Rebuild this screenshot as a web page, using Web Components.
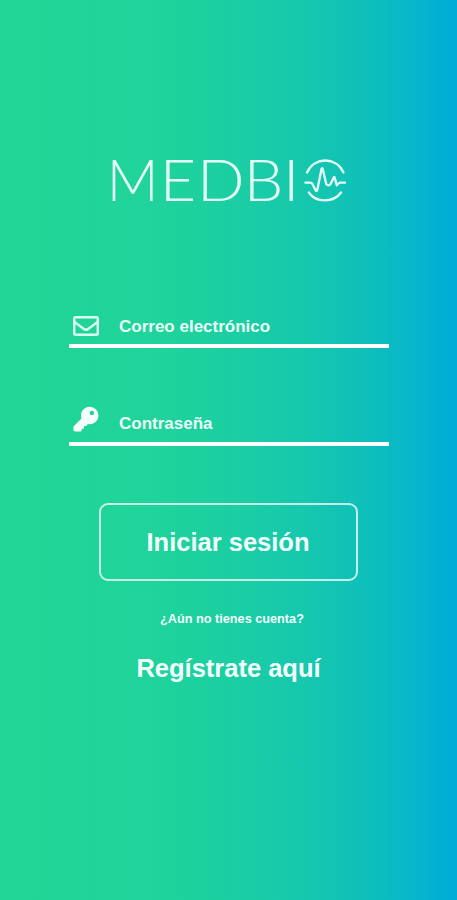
<!DOCTYPE html>
<html lang="es">
<head>
<meta charset="utf-8">
<title>MEDBIO</title>
<style>
  body {
    margin: 0;
    font-family: "Liberation Sans", Arial, sans-serif;
  }
</style>
</head>
<body>
<login-screen>
  <medbio-logo slot="logo"></medbio-logo>
  <login-field icon="mail">Correo electrónico</login-field>
  <login-field icon="key">Contraseña</login-field>
  <outline-button slot="actions">Iniciar sesión</outline-button>
  <sign-up-prompt slot="actions" question="¿Aún no tienes cuenta?">Regístrate aquí</sign-up-prompt>
</login-screen>

<script type="module">
class LoginScreen extends HTMLElement {
  constructor() {
    super();
    this.attachShadow({ mode: 'open' });

    this.shadowRoot.innerHTML = `
      <style>
        :host {
          display: flex;
          flex-direction: column;
          align-items: center;
          box-sizing: border-box;
          block-size: 900px;
          padding-block-start: 156px;
          color: #fff;
          background: linear-gradient(90deg,
            #22d696 0%, #20d499 20%, #1fd39b 35%, #1bcea3 52%,
            #16c8ad 66%, #0fc0b9 79%, #07b6cb 91%, #00add5 98%, #00add6 100%);
        }

        [part="fields"] {
          display: flex;
          flex-direction: column;
          gap: 57px;
          inline-size: 320px;
          margin-block: 104px 57px;
        }

        [part="actions"] {
          display: flex;
          flex-direction: column;
          align-items: center;
          gap: 30px;
        }
      </style>

      <slot name="logo"></slot>
      <div part="fields"><slot></slot></div>
      <div part="actions"><slot name="actions"></slot></div>
    `;
  }
}

class MedbioLogo extends HTMLElement {
  constructor() {
    super();
    this.attachShadow({ mode: 'open' });

    // the pulse emblem stands in for the final O
    this.shadowRoot.innerHTML = `
      <style>
        :host {
          display: block;
          inline-size: 237px;
          block-size: 50px;
        }

        svg {
          display: block;
          overflow: visible;
        }

        text {
          font: 300 57px Lato, sans-serif;
          fill: #e4fff6;
        }

        path {
          fill: none;
          stroke: #e4fff6;
          stroke-width: 2.3;
          stroke-linecap: round;
          stroke-linejoin: round;
        }
      </style>

      <svg width="237" height="50" viewBox="0 0 237 50">
        <text x="-3.300" y="45">M</text>
        <text x="45.300 79 121.700 157.300" y="45" transform="scale(1.1 1)">EDBI</text>
        <path d="M197 16.500C204.500 .5 226 .5 233.500 16.500"/>
        <path d="M198.800 36.500C206 47 223.500 47 231 36.500"/>
        <path d="M195.500 26.700H200.500Q202 26.700 202.700 28.500L205.700 34.500Q206.700 35.800 207.300 34L211.500 13Q212 11.500 212.700 13L216.300 28.300Q218.500 30.500 220.500 28.300L223.700 21.500Q224.400 20.500 224.800 22L226.700 29.300L228.500 27.500Q229.200 26.700 230.500 26.700H235"/>
      </svg>
    `;
  }
}

const icons = {
  mail: `
    <svg width="26" height="20" viewBox="0 0 26 20" fill="none" stroke="#d8fff1" stroke-width="2.5" stroke-linejoin="round">
      <rect x="1.2" y="1.2" width="23.600" height="17.600" rx="1.500"/>
      <path d="M1.500 6L10.500 12.800C12.200 14.100 13.800 14.100 15.500 12.800L24.500 6"/>
    </svg>`,
  key: `
    <svg width="27" height="27" viewBox="0 0 27 27" fill="#f6fffc">
      <path fill-rule="evenodd" d="M17.300.2A9.100 9.100 0 0 1 26.400 9.300A9 9 0 0 1 15.600 18.200L14.400 19.700Q14 20.200 13.400 20.200H11.500V22Q11.500 22.800 10.700 23H9V24.800Q8.900 25.800 8 26H2Q.4 26 .4 24.500V21.500Q.4 20.800 1 20.200L8.800 12.400A9.100 9.100 0 0 1 17.300.2ZM19.600 4.400A2.300 2.300 0 1 0 19.600 9A2.300 2.300 0 1 0 19.600 4.400Z"/>
    </svg>`
};

class LoginField extends HTMLElement {
  static observedAttributes = ['icon'];

  constructor() {
    super();
    this.attachShadow({ mode: 'open' });

    this.shadowRoot.innerHTML = `
      <style>
        :host {
          display: grid;
          grid-template-columns: 26px 1fr;
          column-gap: 20px;
          align-items: center;
          box-sizing: border-box;
          block-size: 40.500px;
          padding-inline-start: 4px;
          border-block-end: 4px solid #fff;
          color: #e9fff8;
          font-size: 17px;
          font-weight: 700;
          line-height: 20px;
        }

        :host([icon="mail"]) {
          block-size: 38px;
        }

        :host([icon="mail"]) [part="icon"] {
          margin-block-end: 2px;
        }

        :host([icon="mail"]) [part="label"] {
          margin-block-end: 1px;
        }

        :host([icon="key"]) [part="icon"] {
          margin-block-end: 7px;
        }

        :host([icon="key"]) [part="label"] {
          margin-block-start: 1px;
        }

        [part="icon"] {
          display: flex;
        }

        [part="label"] {
          padding-inline-start: .5px;
        }
      </style>

      <span part="icon"></span>
      <span part="label"><slot></slot></span>
    `;

    this.$icon = this.shadowRoot.querySelector('[part="icon"]');
  }

  attributeChangedCallback() {
    this.$icon.innerHTML = icons[this.getAttribute('icon')] ?? '';
  }
}

class OutlineButton extends HTMLElement {
  constructor() {
    super();
    this.attachShadow({ mode: 'open' });

    this.shadowRoot.innerHTML = `
      <style>
        :host {
          display: block;
        }

        button {
          display: block;
          box-sizing: border-box;
          inline-size: 259px;
          block-size: 78px;
          padding: 0 1px 0 0;
          border: 2px solid rgb(255 255 255 / 0.75);
          border-radius: 9px;
          background: none;
          color: #f3fffc;
          font: 700 25.500px/30px "Liberation Sans", Arial, sans-serif;
        }
      </style>

      <button type="button"><slot></slot></button>
    `;
  }
}

class SignUpPrompt extends HTMLElement {
  static observedAttributes = ['question'];

  constructor() {
    super();
    this.attachShadow({ mode: 'open' });

    this.shadowRoot.innerHTML = `
      <style>
        :host {
          display: flex;
          flex-direction: column;
          align-items: center;
          gap: 26px;
          font-weight: 700;
          color: #f3fffc;
        }

        [part="question"] {
          padding-inline-start: 7px;
          font-size: 12.700px;
          line-height: 16px;
        }

        [part="link"] {
          font-size: 25.500px;
          line-height: 30px;
        }
      </style>

      <span part="question"></span>
      <span part="link"><slot></slot></span>
    `;

    this.$question = this.shadowRoot.querySelector('[part="question"]');
  }

  attributeChangedCallback() {
    this.$question.textContent = this.getAttribute('question') ?? '';
  }
}

customElements.define('login-screen', LoginScreen);
customElements.define('medbio-logo', MedbioLogo);
customElements.define('login-field', LoginField);
customElements.define('outline-button', OutlineButton);
customElements.define('sign-up-prompt', SignUpPrompt);
</script>
</body>
</html>
